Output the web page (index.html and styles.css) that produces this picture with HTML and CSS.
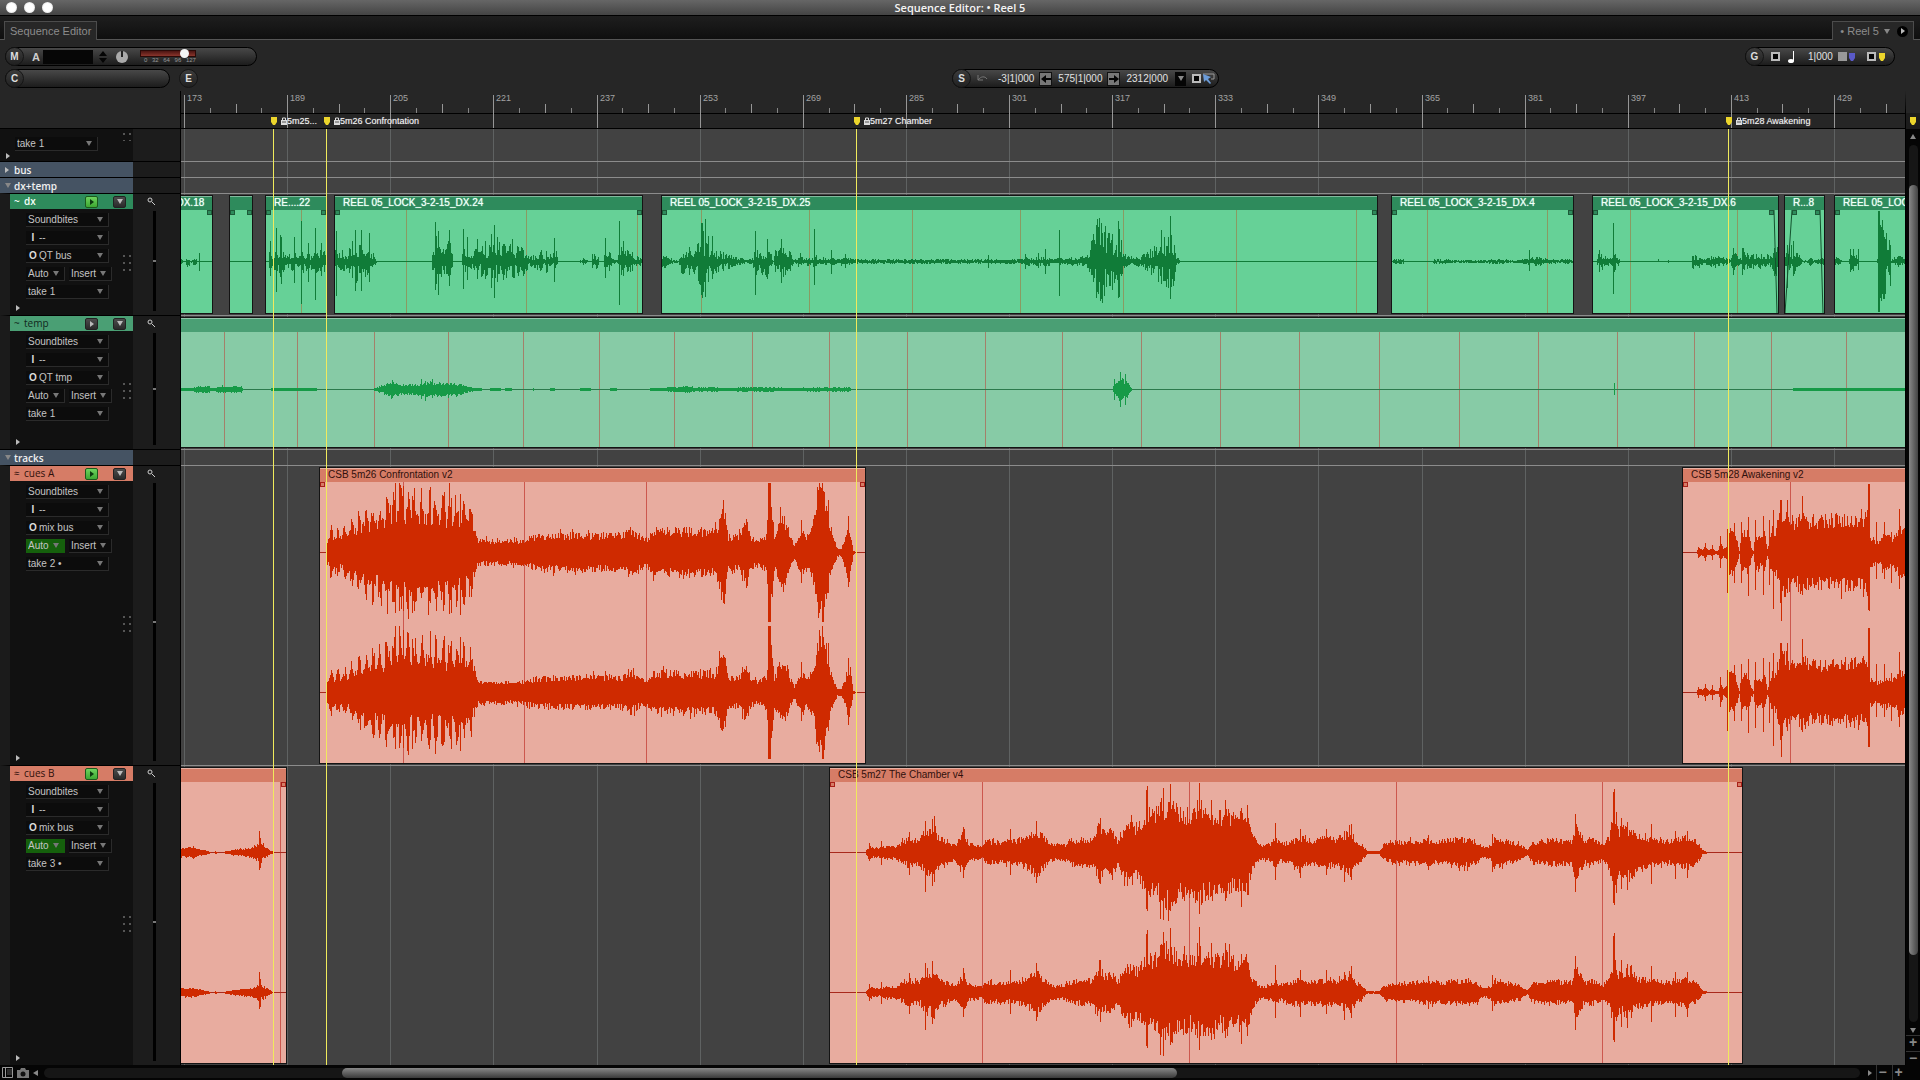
FILE: index.html
```html
<!DOCTYPE html>
<html lang="en">
<head>
<meta charset="utf-8">
<title>Sequence Editor: Reel 5</title>
<link rel="stylesheet" href="styles.css">
</head>
<body>
<header class="titlebar">
  <div class="lights"><i></i><i></i><i></i></div>
  <h1>Sequence Editor: • Reel 5</h1>
</header>

<nav class="tabs">
  <button class="tab">Sequence Editor</button>
  <div class="tab tab-reel">
    <span>• Reel 5</span><i class="tri-down"></i>
    <button class="play-dot" aria-label="Open panel"><i class="tri-right"></i></button>
  </div>
</nav>

<section class="toolbar">
  <div class="tool-row">
    <div class="pill pill-mute">
      <button class="cap">M</button>
      <label class="big" for="audition">A</label>
      <input id="audition" class="field" type="text">
      <svg class="spin" viewBox="0 0 8 12" width="8" height="12"><path d="M4 0 8 5H0zM4 12 0 7h8z" fill="#050505"/></svg>
      <svg class="knob" viewBox="0 0 14 14" width="14" height="14"><circle cx="7" cy="7" r="6" fill="#aaa"/><path d="M7 1v6" stroke="#222" stroke-width="2"/></svg>
      <div class="velocity">
        <input type="range" min="0" max="127" value="110" aria-label="Velocity">
        <div class="scale"><span>0</span><span>32</span><span>64</span><span>96</span><span>127</span></div>
      </div>
    </div>
    <div class="pill pill-grid">
      <button class="cap">G</button>
      <input type="checkbox" class="box" aria-label="Grid">
      <svg class="note" viewBox="0 0 8 12" width="8" height="12"><ellipse cx="3" cy="10" rx="3" ry="2" fill="#fff"/><path d="M5.500 0v10" stroke="#fff"/></svg>
      <span class="num">1|000</span>
      <i class="swatch"></i>
      <svg class="flag" viewBox="0 0 6 8" width="6" height="8"><path d="M0 0h6v5L4 8H2L0 5z" fill="#5a5ac8"/></svg>
      <input type="checkbox" class="box box-last" aria-label="Snap to markers">
      <svg class="flag" viewBox="0 0 6 8" width="6" height="8"><path d="M0 0h6v5L4 8H2L0 5z" fill="#ecd52c"/></svg>
    </div>
  </div>
  <div class="tool-row tool-row-split">
    <div class="group">
      <div class="pill pill-chunk"><button class="cap">C</button></div>
      <button class="cap cap-solo">E</button>
    </div>
    <div class="pill pill-select">
      <button class="cap">S</button>
      <svg class="undo" viewBox="0 0 11 7" width="11" height="7"><path d="M1 0v5h5M1 5C4 1 8 1 10 4" fill="none" stroke="#777"/></svg>
      <span class="num">-3|1|000</span>
      <button class="step" aria-label="Set start"><svg viewBox="0 0 12 12" width="12" height="12"><path d="M1 6 6 2v3h5v2H6v3z" fill="#050505"/></svg></button>
      <span class="num">575|1|000</span>
      <button class="step" aria-label="Set end"><svg viewBox="0 0 12 12" width="12" height="12"><path d="M11 6 6 2v3H1v2h5v3z" fill="#050505"/></svg></button>
      <span class="num">2312|000</span>
      <button class="drop" aria-label="Selection menu"><i class="tri-down"></i></button>
      <input type="checkbox" class="box" aria-label="Link selection">
      <svg class="pointer" viewBox="0 0 12 12" width="12" height="12"><path d="M0 1h11v5H8" fill="none" stroke="#999"/><path d="M0 1l8 3-3 2 3 4-1 1-4-4-2 2z" fill="#6b9bd8"/></svg>
    </div>
  </div>
</section>

<main class="editor">
  <div class="ruler-row">
    <div class="corner"></div>
    <div class="ruler" id="ruler"></div>
    <div class="ruler-end"><svg viewBox="0 0 6 8" width="6" height="8"><path d="M0 0h6v5L4 8H2L0 5z" fill="#ecd52c"/></svg></div>
  </div>

  <div class="arrange-row">
    <div class="arrange">
      <div class="grid" id="grid"></div>

      <section class="track track-stub">
        <div class="panel">
          <span class="pick"><select aria-label="Take"><option>take 1</option></select></span>
          <i class="tri-right expand"></i><i class="dots"></i>
        </div>
        <div class="zoomer"></div>
        <div class="lane"></div>
      </section>

      <section class="track folder">
        <div class="folder-name"><i class="tri-right"></i>bus</div>
        <div class="zoomer"></div><div class="lane"></div>
      </section>
      <section class="track folder">
        <div class="folder-name"><i class="tri-down"></i>dx+temp</div>
        <div class="zoomer"></div><div class="lane"></div>
      </section>

      <section class="track track-dx">
        <div class="panel">
          <div class="name"><span class="glyph">~</span><span class="label">dx</span><button class="play on" aria-label="Play enable"><i class="tri-right"></i></button><button class="menu" aria-label="Track menu"><i class="tri-down"></i></button></div>
          <div class="fields">
            <span class="pick"><select aria-label="View"><option>Soundbites</option></select></span>
            <label class="pick"><b>I</b><select><option>--</option></select></label>
            <label class="pick"><b>O</b><select><option>QT bus</option></select></label>
            <span class="pair"><span class="pick"><select aria-label="Automation"><option>Auto</option></select></span><span class="pick"><select aria-label="Insert"><option>Insert</option></select></span></span>
            <span class="pick"><select aria-label="Take"><option>take 1</option></select></span>
          </div>
          <i class="tri-right expand"></i><i class="dots"></i>
        </div>
        <div class="zoomer"><svg class="lens" viewBox="0 0 8 8" width="8" height="8"><circle cx="3" cy="3" r="2" fill="none" stroke="#ccc"/><path d="M5 5l3 3" stroke="#ccc"/></svg><i class="rail"></i></div>
        <div class="lane" data-track="dx"></div>
      </section>

      <section class="track track-temp">
        <div class="panel">
          <div class="name"><span class="glyph">~</span><span class="label">temp</span><button class="play" aria-label="Play enable"><i class="tri-right"></i></button><button class="menu" aria-label="Track menu"><i class="tri-down"></i></button></div>
          <div class="fields">
            <span class="pick"><select aria-label="View"><option>Soundbites</option></select></span>
            <label class="pick"><b>I</b><select><option>--</option></select></label>
            <label class="pick"><b>O</b><select><option>QT tmp</option></select></label>
            <span class="pair"><span class="pick"><select aria-label="Automation"><option>Auto</option></select></span><span class="pick"><select aria-label="Insert"><option>Insert</option></select></span></span>
            <span class="pick"><select aria-label="Take"><option>take 1</option></select></span>
          </div>
          <i class="tri-right expand"></i><i class="dots"></i>
        </div>
        <div class="zoomer"><svg class="lens" viewBox="0 0 8 8" width="8" height="8"><circle cx="3" cy="3" r="2" fill="none" stroke="#ccc"/><path d="M5 5l3 3" stroke="#ccc"/></svg><i class="rail"></i></div>
        <div class="lane" data-track="temp"></div>
      </section>

      <section class="track folder">
        <div class="folder-name"><i class="tri-down"></i>tracks</div>
        <div class="zoomer"></div><div class="lane"></div>
      </section>

      <section class="track track-cue">
        <div class="panel">
          <div class="name"><span class="glyph">≈</span><span class="label">cues A</span><button class="play on" aria-label="Play enable"><i class="tri-right"></i></button><button class="menu" aria-label="Track menu"><i class="tri-down"></i></button></div>
          <div class="fields">
            <span class="pick"><select aria-label="View"><option>Soundbites</option></select></span>
            <label class="pick"><b>I</b><select><option>--</option></select></label>
            <label class="pick"><b>O</b><select><option>mix bus</option></select></label>
            <span class="pair"><span class="pick active"><select aria-label="Automation"><option>Auto</option></select></span><span class="pick"><select aria-label="Insert"><option>Insert</option></select></span></span>
            <span class="pick"><select aria-label="Take"><option>take 2 •</option></select></span>
          </div>
          <i class="tri-right expand"></i><i class="dots"></i>
        </div>
        <div class="zoomer"><svg class="lens" viewBox="0 0 8 8" width="8" height="8"><circle cx="3" cy="3" r="2" fill="none" stroke="#ccc"/><path d="M5 5l3 3" stroke="#ccc"/></svg><i class="rail"></i></div>
        <div class="lane" data-track="cuesA"></div>
      </section>

      <section class="track track-cue">
        <div class="panel">
          <div class="name"><span class="glyph">≈</span><span class="label">cues B</span><button class="play on" aria-label="Play enable"><i class="tri-right"></i></button><button class="menu" aria-label="Track menu"><i class="tri-down"></i></button></div>
          <div class="fields">
            <span class="pick"><select aria-label="View"><option>Soundbites</option></select></span>
            <label class="pick"><b>I</b><select><option>--</option></select></label>
            <label class="pick"><b>O</b><select><option>mix bus</option></select></label>
            <span class="pair"><span class="pick active"><select aria-label="Automation"><option>Auto</option></select></span><span class="pick"><select aria-label="Insert"><option>Insert</option></select></span></span>
            <span class="pick"><select aria-label="Take"><option>take 3 •</option></select></span>
          </div>
          <i class="tri-right expand"></i><i class="dots"></i>
        </div>
        <div class="zoomer"><svg class="lens" viewBox="0 0 8 8" width="8" height="8"><circle cx="3" cy="3" r="2" fill="none" stroke="#ccc"/><path d="M5 5l3 3" stroke="#ccc"/></svg><i class="rail"></i></div>
        <div class="lane" data-track="cuesB"></div>
      </section>

      <div class="markers" id="markers"></div>
    </div>

    <aside class="vscroll">
      <i class="tri-up"></i>
      <div class="groove"><div class="thumb"></div></div>
      <i class="tri-down"></i>
      <button aria-label="Zoom in vertically">+</button>
      <button aria-label="Zoom out vertically">−</button>
    </aside>
  </div>
</main>

<footer class="hscroll">
  <svg viewBox="0 0 11 11" width="11" height="11"><path d="M.5.5h10v10H.5zM3.500.5v10" fill="none" stroke="#999"/><path d="M5 3h5M5 5h5M5 7h5" stroke="#555"/></svg>
  <svg class="camera" viewBox="0 0 12 10" width="12" height="10"><path d="M0 2h3l1-2h4l1 2h3v8H0z" fill="#777"/><circle cx="6" cy="6" r="2.500" fill="#111"/></svg>
  <i class="tri-left"></i>
  <div class="groove"><div class="thumb"></div></div>
  <i class="tri-right"></i>
  <button aria-label="Zoom out">−</button>
  <button aria-label="Zoom in">+</button>
  <span class="grip"></span>
</footer>
<script src="timeline.js"></script>
</body>
</html>
```
FILE: styles.css
```css
* { box-sizing: border-box; }

body {
  margin: 0;
  min-height: 100vh;
  display: flex;
  flex-direction: column;
  background: #262626;
  color: #ddd;
  font: 10px/12px "Liberation Sans", Arial, sans-serif;
}

button, select, input { font: inherit; color: inherit; margin: 0; padding: 0; border: 0; background: none; }
select { appearance: none; outline: 0; }
svg { display: block; flex: none; }

/* small triangles */
.tri-down, .tri-up, .tri-left, .tri-right { width: 0; height: 0; border: 3px solid transparent; flex: none; }
.tri-down { border-top: 5px solid #888; border-bottom: 0; }
.tri-up { border-bottom: 5px solid #888; border-top: 0; }
.tri-right { border-left: 4px solid #bbb; border-right: 0; }
.tri-left { border-right: 5px solid #888; border-left: 0; }

/* window frame */
.titlebar {
  height: 16px;
  display: grid;
  grid-template-columns: 1fr auto 1fr;
  align-items: center;
  padding: 0 6px;
  background: linear-gradient(#666, #444);
  border-bottom: 1px solid #000;
}
.titlebar h1 { margin: 0; font: 600 11px/15px "Open Sans", "Noto Sans", sans-serif; color: #f4f4f4; }
.lights { display: flex; gap: 7px; }
.lights i { width: 11px; height: 11px; border-radius: 50%; background: radial-gradient(#fff 50%, #bbb); }

.tabs {
  height: 24px;
  display: flex;
  justify-content: space-between;
  align-items: flex-end;
  padding: 0 6px 0 4px;
  background: linear-gradient(#1e1e1e, #0f0f0f);
  border-bottom: 1px solid #555;
}
.tab {
  height: 19px;
  padding: 0 5px;
  margin-bottom: -1px;
  font-size: 11px;
  line-height: 18px;
  color: #8c8c8c;
  background: #272727;
  border: 1px solid #4c4c4c;
  border-bottom: 0;
}
.tab-reel { display: flex; align-items: center; gap: 5px; padding: 0 5px 0 7px; }
.play-dot { display: flex; align-items: center; justify-content: center; width: 11px; height: 11px; border-radius: 50%; background: #000; margin-left: 2px; }

/* toolbar */
.toolbar { display: flex; flex-direction: column; gap: 3px; padding: 7px 25px 3px 5px; }
.tool-row { display: flex; justify-content: space-between; }
.tool-row-split { display: grid; grid-template-columns: 947fr 943fr; }
.group { display: flex; gap: 9px; }
.pill {
  height: 19px;
  display: flex;
  align-items: center;
  border: 1px solid #000;
  border-radius: 10px;
  background: linear-gradient(#484848, #1c1c1c);
  justify-self: start;
}
.cap {
  width: 19px;
  height: 19px;
  flex: none;
  margin-left: -1px;
  border: 1px solid #151515;
  border-radius: 50%;
  background: linear-gradient(#3c3c3c, #202020);
  font-weight: bold;
  line-height: 17px;
  text-align: center;
  color: #ddd;
}
.cap-solo { margin-left: 0; }
.big { font-size: 11px; font-weight: bold; margin-left: 8px; color: #ccc; }
.pill-mute { width: 252px; }
.pill-chunk { width: 165px; }
.field { width: 50px; height: 14px; background: #060606; margin-left: 3px; }
.spin { margin-left: 6px; }
.knob { margin-left: 8px; }
.velocity { width: 56px; margin-left: 11px; }
.velocity input { appearance: none; display: block; width: 56px; height: 7px; background: linear-gradient(#4c1512, #8a352c); border: 1px solid #2a0a08; }
.velocity input::-webkit-slider-thumb { appearance: none; width: 9px; height: 9px; border-radius: 50%; background: #f4f4f4; }
.scale { display: flex; justify-content: space-between; padding-left: 4px; font-size: 6px; line-height: 7px; color: #999; }
.pill-grid { width: 150px; }
.pill-select { width: 267px; }
.num { color: #e2e2e2; white-space: nowrap; }
.box { appearance: none; width: 9px; height: 9px; flex: none; border: 2px solid #bbb; background: #050505; }
.pill-grid .box { margin-left: 7px; }
.note { margin-left: 8px; }
.pill-grid .num { margin-left: 12px; width: 26px; }
.swatch { width: 9px; height: 9px; margin: 0 2px 0 4px; background: #999; }
.pill-grid .box-last { margin: 0 3px 0 12px; }
.undo { margin: 0 10px 0 6px; }
.step { display: flex; align-items: center; justify-content: center; width: 13px; height: 14px; background: #777; border: 1px solid #111; margin: 0 6px 0 5px; }
.drop { display: flex; align-items: center; justify-content: center; width: 11px; height: 14px; background: #050505; margin: 0 6px 0 7px; }
.pointer { margin-left: 2px; }

/* ruler */
.editor { flex: 1; display: flex; flex-direction: column; }
.ruler-row { display: flex; height: 38px; }
.corner { width: 181px; border-right: 1px solid #000; border-bottom: 1px solid #000; }
.ruler { flex: 1; position: relative; overflow: hidden; border-bottom: 1px solid #000; background: linear-gradient(#000, #000) 0 22px / 100% 1px no-repeat; }
.ruler-end { width: 15px; display: flex; justify-content: center; padding-top: 4px; border-top: 22px solid #262626; border-left: 1px solid #000; background: #1c1c1c; }
.tick { position: absolute; bottom: 15px; width: 1px; height: 5px; background: #858585; }
.tick-half { height: 9px; background: #969696; }
.tick-major { bottom: 0; height: 33px; background: #969696; }
.bar-no { position: absolute; top: 1px; font-size: 9px; line-height: 12px; color: #a2a2a2; }
.marker-label { position: absolute; top: 24px; height: 12px; display: flex; align-items: center; gap: 4px; font-size: 9px; color: #f2f2f2; text-shadow: 0 0 1px #999; white-space: nowrap; }
.marker-label .lock { margin-right: -4px; }

/* arrange area */
.arrange-row { flex: 1; display: flex; background: #000; }
.arrange { flex: 1; display: flex; flex-direction: column; position: relative; background: #424242; overflow: hidden; }
.grid, .markers { position: absolute; top: 0; right: 0; bottom: 0; left: 181px; pointer-events: none; overflow: hidden; }
.grid i { position: absolute; top: 0; bottom: 0; width: 1px; background: #5f6262; }
.markers i { position: absolute; top: 0; bottom: 0; width: 1px; background: #f0ea5c; }

.track { display: flex; }
.panel { width: 133px; position: relative; background: #111; border-left: 10px solid #1b1b1b; border-top: 1px solid #000; }
.zoomer { width: 48px; background: #1c1c1c; border-right: 1px solid #000; border-top: 1px solid #000; display: flex; flex-direction: column; padding-bottom: 4px; }
.lane { flex: 1; position: relative; border-top: 1px solid #8c8c8c; overflow: hidden; }
.track-stub { height: 32px; }
.track-stub .panel { border-left: 0; border-top: 0; padding: 8px 0 0 15px; }
.track-stub .zoomer, .track-stub .lane { border-top: 0; }
.folder { height: 16px; }
.folder-name { width: 133px; display: flex; align-items: center; gap: 3px; padding-left: 5px; background: #455363; border-top: 1px solid #000; font: 600 10px/14px "Open Sans", "Noto Sans", sans-serif; color: #f0f0f0; }
.folder-name i { width: 6px; }
.track-dx { height: 122px; --head: #2e8b5c; --body: #66d197; --wave: #107c38; --axis: #107c38; --ink: #f4fff8; --cut: #8a9a62; }
.track-temp { height: 134px; --head: #4a9f74; --body: #87cba6; --wave: #169a47; --axis: #2c7a4c; --ink: #10281c; --cut: #a4806a; }
.track-cue { flex: 1 0 200px; --head: #d67c66; --body: #e8ac9f; --wave: #cf2a00; --axis: #a8291c; --ink: #30100c; --cut: #cc584e; }

.name { display: flex; align-items: center; height: 15px; padding: 0 7px 0 4px; background: var(--head); color: var(--ink); font: 10px/15px "Open Sans", "Noto Sans", sans-serif; }
.track-dx .name { font-weight: 600; }
.glyph { width: 10px; }
.label { flex: 1; }
.play, .menu { display: flex; align-items: center; justify-content: center; width: 13px; height: 12px; border: 1px solid #222; border-radius: 2px; background: linear-gradient(#4c4c4c, #2a2a2a); }
.play { margin-right: 15px; }
.play.on { background: linear-gradient(#6ed35e, #3da832); border-color: #1b5a1c; }
.play.on i { border-left-color: #0c3a10; }
.menu i { border-top-color: #bbb; }

.fields { display: flex; flex-direction: column; gap: 4px; padding: 4px 0 0 16px; }
.pick { display: flex; align-items: center; position: relative; width: 83px; height: 14px; padding-left: 2px; background: #0c0c0c; border: solid #2b2b2b; border-width: 0 1px 1px 0; color: #c4c4c4; }
.pick select { flex: 1; min-width: 0; }
.pick b { width: 10px; color: #ddd; text-align: center; }
.pick b + select { margin-left: 1px; }
.pick::after { content: ""; position: absolute; right: 5px; top: 4px; border: 3px solid transparent; border-top: 5px solid #777; border-bottom: 0; pointer-events: none; }
.pair { display: flex; gap: 4px; }
.pair .pick { width: 39px; }
.pair .pick:last-child { width: 43px; }
.pick.active { background: #15600c; border-color: #15600c; }
.expand { position: absolute; left: 6px; bottom: 4px; }
.track-stub .expand { bottom: 2px; }
.dots { position: absolute; right: 2px; top: 50%; width: 8px; height: 16px; background: radial-gradient(circle at 1px 1px, #555 1px, transparent 1px) 0 0 / 6px 7px; }
.track-stub .dots { top: 4px; height: 8px; }
.lens { margin: 3px 0 0 14px; }
.rail { flex: 1; width: 3px; margin: 6px 0 0 20px; background: linear-gradient(#777, #777) center / 3px 2px no-repeat #000; }

/* clips */
.clip { position: absolute; top: 1px; bottom: 1px; display: flex; flex-direction: column; border: 1px solid #141414; background: var(--body); }
.clip-name { height: 14px; flex: none; padding-left: 8px; overflow: hidden; white-space: nowrap; line-height: 12px; background: var(--head); border-top: 1px solid rgba(255, 255, 255, .4); color: var(--ink); }
.track-dx .clip-name { text-shadow: 0 0 1px #cfe; }
.clip svg { flex: 1; min-height: 0; width: 100%; display: block; shape-rendering: crispEdges; }
.wave { fill: var(--wave); }
.axis { stroke: var(--axis); stroke-width: 1; }
.cut { stroke: var(--cut); stroke-width: 1; }
.fade { fill: none; stroke: #14522e; stroke-width: 1; shape-rendering: auto; }
.handle { fill: var(--head); stroke: #1d5a38; stroke-width: 1; }
.track-cue .handle { stroke: #a82018; }

/* scroll bars */
.vscroll { width: 15px; display: flex; flex-direction: column; align-items: center; gap: 3px; padding-top: 5px; border-left: 1px solid #000; background: #050505; color: #888; }
.groove { flex: 1; background: #161616; border-radius: 5px; display: flex; }
.vscroll .groove { width: 9px; flex-direction: column; margin-top: 3px; padding-top: 40px; }
.vscroll .thumb { width: 9px; height: 92%; }
.thumb { border-radius: 5px; background: linear-gradient(90deg, #888, #444); }
.vscroll button { width: 14px; height: 14px; margin-top: -1px; border-top: 1px solid #333; font-weight: bold; font-size: 14px; line-height: 11px; }
.vscroll .tri-down { margin-top: 3px; }
.hscroll { height: 15px; display: flex; align-items: center; gap: 4px; padding-left: 2px; background: #050505; color: #888; }
.hscroll .groove { height: 10px; padding-left: 298px; margin-left: 2px; }
.hscroll .thumb { width: 55%; height: 10px; background: linear-gradient(#888, #3a3a3a); }
.hscroll .tri-right { margin-left: 4px; border-left-color: #888; }
.hscroll button { width: 12px; height: 15px; border-left: 1px solid #333; font-weight: bold; font-size: 14px; line-height: 13px; }
.grip { width: 12px; }
```
FILE: timeline.js
```js
// Timeline positions are window pixels; the lanes begin at ORIGIN.
const ORIGIN = 181;
const BAR_STEP = 103.125; // pixels per 16 bars
const FIRST_BAR = 173;

const markers = [
  [273, '5m25...'], [326, '5m26 Confrontation'],
  [856, '5m27 Chamber'], [1728, '5m28 Awakening'],
];

// env: "x:level" break points; hits: "x:up/down" single transients
const tracks = {
  dx: {
    height: 103, rough: 0.85,
    cuts: [301, 406, 526, 637, 701, 809, 912, 1020, 1123, 1236, 1356, 1427, 1547, 1630, 1737],
    clips: [
      [55, 213, 'REEL 05_LOCK_3-2-15_DX.18'], [229, 253, ''], [265, 327, 'RE....22'],
      [334, 643, 'REEL 05_LOCK_3-2-15_DX.24'], [661, 1378, 'REEL 05_LOCK_3-2-15_DX.25'],
      [1391, 1574, 'REEL 05_LOCK_3-2-15_DX.4'], [1592, 1779, 'REEL 05_LOCK_3-2-15_DX.6', 0, 4],
      [1784, 1825, 'R...8', 7, 4], [1834, 2050, 'REEL 05_LOCK_3-2-15_DX.9'],
    ],
    env: '181:2 185:0 186:6 189:6 190:0 194:4 196:4 197:0 268:0 269:12 274:9 282:12 286:4 293:12 297:7 303:12 307:8 312:8 314:9 320:16 326:14 327:0 335:13 346:10 352:18 357:20 365:16 372:10 376:1 377:0 431:0 432:20 436:26 441:20 444:14 449:24 452:12 453:0 461:0 462:14 468:10 480:15 490:18 500:20 515:16 524:14 528:5 540:9 545:4 546:11 550:7 556:10 558:0 579:0 583:4 588:0 591:0 592:8 598:7 599:0 603:0 605:13 611:9 612:2 617:1 619:14 626:13 633:9 641:3 642:0 664:7 674:1 678:1 680:12 688:13 695:18 702:26 706:22 712:13 725:9 736:4 738:2 740:4 745:1 752:4 755:14 758:10 768:16 771:8 773:0 775:14 783:17 791:9 794:1 800:9 803:2 805:4 812:3 815:9 818:2 823:4 829:2 831:4 838:3 845:5 850:3 860:2 900:2 985:2 1020:2 1026:6 1031:3 1036:5 1046:4 1060:3 1070:4 1086:5 1089:10 1092:26 1096:44 1102:44 1107:34 1112:28 1116:18 1119:24 1122:20 1126:7 1134:4 1145:9 1155:16 1161:24 1168:26 1173:25 1176:6 1179:1 1180:0 1392:0 1393:2 1403:2 1404:0 1420:0 1421:1 1422:0 1432:0 1433:2 1440:2 1460:1 1500:2 1515:1 1527:3 1531:4 1540:4 1548:2 1573:2 1574:0 1596:0 1598:8 1602:9 1607:4 1610:3 1614:10 1618:4 1620:0 1657:0 1658:2 1659:0 1667:0 1668:2 1669:0 1691:0 1692:7 1698:6 1705:3 1715:6 1727:3 1730:2 1733:11 1738:4 1741:2 1743:12 1748:7 1765:8 1771:6 1774:15 1778:15 1785:14 1793:13 1800:5 1803:1 1807:1 1810:5 1813:1 1818:3 1824:4 1835:6 1841:1 1842:0 1848:0 1849:8 1858:8 1859:0 1876:0 1877:2 1878:40 1883:42 1888:20 1890:18 1891:2 1898:6 1905:3 2050:2',
    hits: '199:8/9 270:20/14 276:33/30 280:26/15 281:24/22 294:24/21 301:40/42 308:18/20 315:33/38 321:18/14 336:30/34 352:20/16 355:31/29 361:31/29 369:28/20 435:39/28 438:30/33 449:31/24 463:32/27 467:24/18 477:22/17 485:20/17 491:27/26 494:36/36 497:24/20 512:22/15 541:11/8 554:23/20 605:23/16 619:40/43 623:20/14 701:38/33 702:38/36 703:30/30 705:42/35 708:25/20 712:25/17 755:30/33 767:22/17 781:22/21 814:32/23 831:11/12 845:7/6 988:6/6 1025:7/7 1038:8/6 1045:12/12 1059:31/34 1096:36/36 1097:32/30 1098:34/32 1101:38/37 1102:28/32 1109:23/24 1118:40/36 1119:32/35 1161:31/22 1170:45/37 1171:26/25 1529:11/9 1599:11/10 1613:38/32 1733:13/13 1742:13/13 1787:16/26 1793:20/14 1850:12/10 1853:12/9 1858:12/8 1878:50/50 1879:50/50 1880:36/36 1881:34/34 1882:33/32 1883:26/24 1884:24/26 1885:22/20 1890:16/24',
  },
  temp: {
    height: 115, rough: 0.5,
    cuts: [224, 297, 374, 448, 523, 599, 674, 752, 829, 907, 985, 1062, 1141, 1220, 1299, 1379, 1459, 1538, 1617, 1694, 1771, 1846],
    clips: [[150, 2050, '']],
    env: '181:1 192:1 197:3 204:4 209:3 211:1 214:1 218:3 241:3 242:1 244:0 269:0 271:1 316:1 317:0 373:0 374:1 384:5 392:8 400:5 420:6 430:8 448:7 462:5 470:2 481:1 483:0 489:0 490:1 500:1 502:0 506:1 511:1 512:0 532:0 533:1 534:0 549:0 550:1 554:1 555:0 578:0 580:1 590:1 591:0 609:0 610:1 616:1 617:0 648:0 650:1 660:1 664:1 668:2 690:3 694:2 700:2 713:2 717:2 725:1 740:2 770:2 790:1 820:2 827:2 829:1 833:2 849:2 851:0 1112:0 1114:8 1117:8 1119:14 1122:13 1124:7 1126:11 1129:4 1132:0 1791:0 1793:1 1810:1 1860:1 1905:1 2050:1',
    hits: '392:9/8 421:10/9 425:8/11 432:10/8 1114:10/10 1120:17/17 1125:15/15 1614:6/5',
  },
  cuesA: {
    height: 281, rough: 0.4, stereo: true, beat: [327, 474, 7],
    cuts: [403, 524, 646, 1790],
    clips: [[319, 866, 'CSB 5m26 Confrontation v2'], [1682, 2050, 'CSB 5m28 Awakening v2']],
    env: '326:0 327:20 331:26 340:25 350:32 360:42 370:50 380:52 390:60 400:66 420:62 440:58 455:58 468:52 473:42 476:18 478:13 490:14 520:13 535:18 555:20 580:20 610:20 622:20 630:26 640:18 647:16 652:25 680:25 714:25 717:30 720:44 722:54 725:50 728:18 740:20 746:36 751:18 757:14 766:20 768:60 771:60 774:20 780:38 786:36 790:18 794:7 800:24 808:18 814:38 817:68 824:68 828:36 832:18 837:4 841:4 845:18 848:36 851:18 853:2 855:0 1696:0 1698:4 1702:3 1705:6 1709:2 1712:4 1715:1 1718:2 1720:12 1723:4 1726:7 1728:24 1733:25 1737:12 1739:1 1741:22 1748:24 1751:6 1753:1 1755:22 1761:15 1764:26 1767:3 1769:10 1771:24 1776:24 1780:50 1783:50 1788:40 1795:36 1803:44 1810:38 1820:38 1840:40 1862:40 1867:44 1869:58 1870:18 1877:12 1885:20 1893:16 1900:28 1905:26 2050:20',
    hits: '395:70/60 399:70/58 403:66/58 408:60/66 412:56/60 430:65/50 444:60/52 451:54/60 460:58/62 768:70/70 769:70/70 770:70/70 819:66/60 822:70/70 823:58/70 828:52/40 848:36/34 801:32/30 1698:5/5 1705:9/8 1712:7/7 1720:16/15 1727:23/40 1734:29/30 1741:30/30 1748:35/43 1755:32/37 1763:36/42 1769:32/32 1773:42/56 1780:52/50 1781:52/68 1787:52/40 1802:56/42 1868:68/57 1869:68/57 1876:30/26 1884:30/26 1891:20/30 1899:43/36',
  },
  cuesB: {
    height: 281, rough: 0.45, stereo: true,
    cuts: [280, 982, 1189, 1396, 1602],
    clips: [[120, 287, ''], [829, 1743, 'CSB 5m27 The Chamber v4']],
    env: '181:5 193:6 200:3 208:1 212:0 215:1 219:0 222:0 235:3 250:5 256:8 260:10 264:7 270:2 273:0 865:0 866:2 869:8 873:5 881:5 885:7 895:7 901:11 909:17 920:15 926:28 930:24 934:31 938:18 945:14 955:9 960:18 964:22 968:10 982:7 985:14 1000:12 1010:13 1025:17 1036:26 1042:20 1050:10 1055:8 1065:9 1070:14 1092:16 1095:24 1100:32 1105:20 1112:26 1117:14 1122:26 1128:35 1136:30 1143:38 1147:52 1152:40 1160:54 1170:62 1180:50 1190:45 1199:55 1210:50 1220:44 1226:48 1235:42 1242:48 1248:42 1252:20 1258:10 1262:7 1270:10 1275:16 1280:10 1287:12 1300:17 1310:14 1326:17 1335:15 1344:20 1351:25 1355:14 1361:9 1367:1 1379:1 1383:9 1410:13 1428:14 1445:13 1452:16 1470:15 1478:11 1483:5 1490:8 1494:17 1505:13 1520:9 1527:2 1532:12 1550:15 1572:13 1575:34 1581:20 1585:13 1590:16 1603:9 1609:20 1612:36 1615:48 1618:26 1630:30 1636:20 1650:15 1655:16 1670:13 1678:16 1688:18 1696:12 1700:7 1702:2 1708:0',
    hits: '259:21/17 260:14/15 869:9/8 881:11/12 909:20/22 925:31/39 932:33/33 963:25/25 1010:23/22 1036:31/30 1100:34/31 1146:62/56 1147:66/58 1160:50/66 1163:64/67 1170:68/55 1199:69/61 1197:52/48 1211:52/40 1225:52/48 1241:40/54 1275:29/27 1300:23/25 1326:23/22 1344:21/29 1351:28/27 1428:17/17 1492:18/19 1575:38/39 1613:60/50 1614:63/52 1621:34/36 1627:30/37 1651:28/31 1675:21/26 1687:21/25',
  },
};

let seed = 7;
const rand = () => (seed = (seed * 16807) % 2147483647) / 2147483647;
const add = (parent, cls, left, text) => {
  const el = document.createElement(text === undefined ? 'i' : 'span');
  el.className = cls;
  el.style.left = left + 'px';
  if (text !== undefined) el.textContent = text;
  return parent.appendChild(el);
};

function levelAt(points, x) {
  for (let i = 1; i < points.length; i++) {
    const [x0, a] = points[i - 1], [x1, b] = points[i];
    if (x >= x0 && x < x1) return a + (b - a) * (x - x0) / (x1 - x0);
  }
  return 0;
}

function wavePath(track, from, to, start, mid, limit, gain) {
  const points = track.env.split(' ').map(p => p.split(':').map(Number));
  const hits = new Map(track.hits.split(' ').map(h => {
    const [x, v] = h.split(':');
    return [+x, v.split('/').map(Number)];
  }));
  let d = '';
  for (let x = Math.max(from, ORIGIN); x < to; x++) {
    const level = levelAt(points, x);
    if (level < 0.4 && !hits.has(x)) continue;
    let scale = gain;
    if (track.beat && x >= track.beat[0] && x < track.beat[1]) {
      const phase = ((x - track.beat[0]) % track.beat[2]) / track.beat[2];
      scale *= 0.66 + 0.5 * Math.max(0, 1 - 2.6 * Math.abs(phase - 0.5));
    }
    const jump = () => (1 - track.rough * rand()) * (rand() > 0.93 ? 1.2 : 1);
    let up = level * scale * jump(), down = level * scale * jump();
    if (hits.has(x)) {
      up = Math.max(up, hits.get(x)[0] * (gain + 1) / 2);
      down = Math.max(down, hits.get(x)[1] * (gain + 1) / 2);
    }
    up = Math.round(Math.min(up, limit));
    down = Math.round(Math.min(down, limit));
    d += `M${x - start} ${mid - up}h1V${mid + down + 1}h-1z`;
  }
  return d;
}

function drawClip(lane, track, [start, end, name, fadeIn, fadeOut]) {
  const clip = add(lane, 'clip', start - ORIGIN, '');
  clip.style.width = end - start + 'px';
  const title = document.createElement('span');
  title.className = 'clip-name';
  title.textContent = name;
  clip.append(title);

  const w = end - start - 2, h = track.height, x0 = start + 1;
  const mids = track.stereo ? [Math.floor(h / 4), Math.floor(h * 3 / 4)] : [Math.floor(h / 2)];
  const limit = mids[0] - 1;
  let s = '';
  for (const c of track.cuts) if (c > start && c < end) s += `<path class="cut" d="M${c - x0 + 0.5} 0V${h}"/>`;
  mids.forEach((m, i) => {
    s += `<path class="axis" d="M0 ${m + 0.5}H${w}"/>`;
    s += `<path class="wave" d="${wavePath(track, start + 1, end - 1, x0, m, limit, i ? 0.88 : 1)}"/>`;
  });
  if (fadeIn) s += `<path class="fade" d="M0 ${h}L${fadeIn} 0"/>`;
  if (fadeOut) s += `<path class="fade" d="M${w - fadeOut} 0L${w - 1} ${h}"/>`;
  if (name || !track.cuts.includes(224)) {
    s += `<path class="handle" d="M${(fadeIn || 0) + 0.5} .5h4v4h-4zM${w - (fadeOut || 0) - 4.5} .5h4v4h-4z"/>`;
  }
  clip.insertAdjacentHTML('beforeend', `<svg viewBox="0 0 ${w} ${h}" preserveAspectRatio="none">${s}</svg>`);
}

const ruler = document.getElementById('ruler');
const grid = document.getElementById('grid');
const span = Math.floor((ruler.clientWidth - 24) / BAR_STEP);
for (let i = 0; i <= span; i++) {
  const x = 3 + i * BAR_STEP;
  add(ruler, 'tick tick-major', Math.round(x));
  add(ruler, 'tick', Math.round(x + BAR_STEP / 4));
  add(ruler, 'tick tick-half', Math.round(x + BAR_STEP / 2));
  add(ruler, 'tick', Math.round(x + BAR_STEP * 3 / 4));
  add(ruler, 'bar-no', Math.round(x) + 3, FIRST_BAR + 16 * i);
  add(grid, '', Math.round(x));
}

const flag = '<svg viewBox="0 0 6 8" width="6" height="8"><path d="M0 0h6v5L4 8H2L0 5z" fill="#ecd52c"/></svg>';
const lock = '<svg class="lock" viewBox="0 0 6 8" width="6" height="8"><path d="M0 3h6v5H0z" fill="#ddd"/><path d="M1.500 3V1h3v2" fill="none" stroke="#ddd"/><path d="M1 5h4" stroke="#555"/></svg>';
for (const [x, text] of markers) {
  add(document.getElementById('markers'), '', x - ORIGIN);
  const label = add(ruler, 'marker-label', x - ORIGIN - 2, '');
  label.innerHTML = `${flag}${lock}<span>${text}</span>`;
}

for (const lane of document.querySelectorAll('[data-track]')) {
  const track = tracks[lane.dataset.track];
  for (const clip of track.clips) drawClip(lane, track, clip);
}
```
